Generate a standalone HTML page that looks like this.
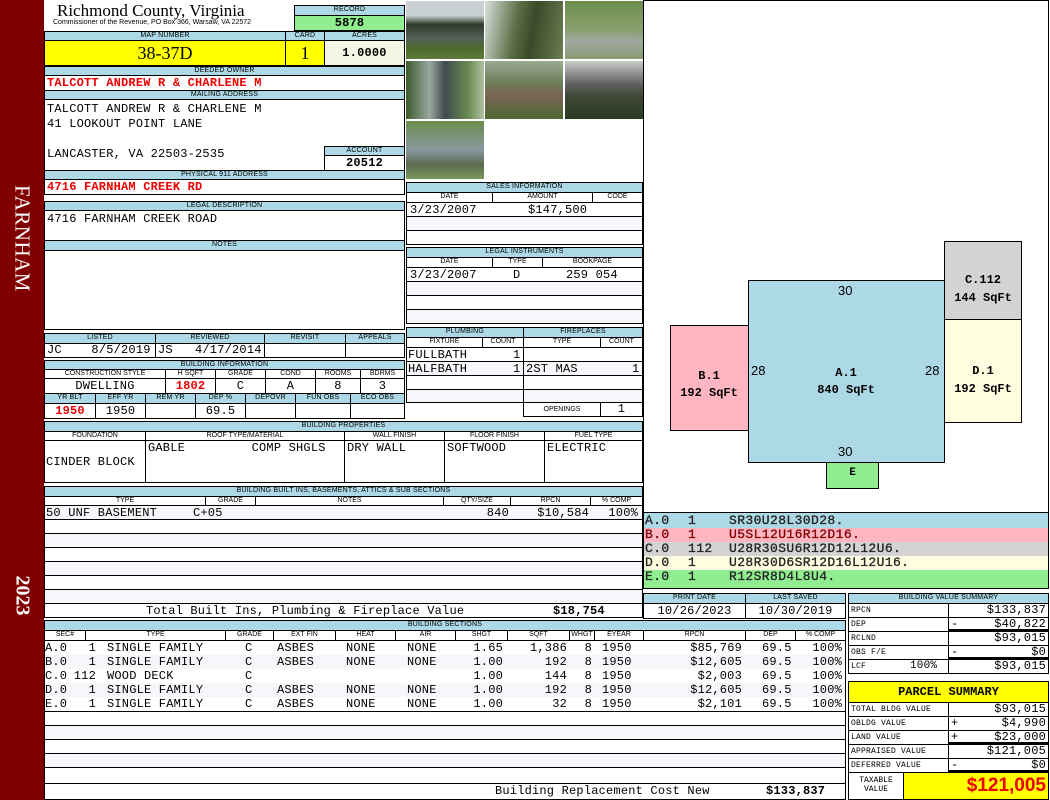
<!DOCTYPE html>
<html><head><meta charset="utf-8"><style>
*{margin:0;padding:0;box-sizing:border-box}
body{width:1050px;height:800px;position:relative;background:#fff;overflow:hidden;font-family:"Liberation Mono",monospace}
.a{position:absolute;border:1px solid #000;overflow:hidden;white-space:nowrap;background:#fff}
.h{position:absolute;border:1px solid #000;background:#add8e6;font:7px/8px "Liberation Sans",sans-serif;text-align:center;overflow:hidden;white-space:nowrap;letter-spacing:.2px}
.w{position:absolute;border:1px solid #000;background:#fff;font:7px/8px "Liberation Sans",sans-serif;text-align:center;overflow:hidden;white-space:nowrap}
.m{font-family:"Liberation Mono",monospace;font-size:12px;letter-spacing:.2px;padding:0 2px}
.r{color:#e00;font-weight:bold}
.t{position:absolute;white-space:nowrap}
.s{position:absolute;white-space:nowrap;font:12px/14px "Liberation Mono",monospace;letter-spacing:.2px}
.R{text-align:right}
.ph{position:absolute;border:1px solid #fff}
</style></head><body>
<div style="position:absolute;left:0;top:0;width:44px;height:800px;background:#800000"></div>
<div class="t" style="top:226px;transform:rotate(90deg);transform-origin:center;font:21px 'Liberation Serif',serif;color:#fff;text-align:center;left:-38px;width:120px;letter-spacing:.5px">FARNHAM</div>
<div class="t" style="left:-20px;top:584px;width:84px;transform:rotate(90deg);font:bold 20px 'Liberation Serif',serif;color:#fff;text-align:center">2023</div>

<div class="t" style="left:57px;top:1px;font:17px 'Liberation Serif',serif">Richmond County, Virginia</div>
<div class="t" style="left:53px;top:19px;font:7px 'Liberation Sans',sans-serif">Commissioner of the Revenue, PO Box 366, Warsaw, VA 22572</div>
<div class="h" style="left:294px;top:5px;width:111px;height:11px">RECORD</div>
<div class="a m" style="left:294px;top:15px;width:111px;height:16px;background:#90ee90;text-align:center;font-weight:bold;line-height:14px">5878</div>

<div class="h" style="left:44px;top:31px;width:242px;height:10px">MAP NUMBER</div>
<div class="h" style="left:285px;top:31px;width:40px;height:10px">CARD</div>
<div class="h" style="left:324px;top:31px;width:81px;height:10px">ACRES</div>
<div class="a" style="left:44px;top:40px;width:242px;height:26px;background:#ffff00;font:18px/24px 'Liberation Serif',serif;text-align:center">38-37D</div>
<div class="a" style="left:285px;top:40px;width:40px;height:26px;background:#ffff00;font:18px/24px 'Liberation Serif',serif;text-align:center">1</div>
<div class="a m" style="left:324px;top:40px;width:81px;height:26px;background:#f5f5e6;font-weight:bold;text-align:center;line-height:24px">1.0000</div>

<div class="h" style="left:44px;top:66px;width:361px;height:10px">DEEDED OWNER</div>
<div class="a m r" style="left:44px;top:75px;width:361px;height:16px;line-height:15px">TALCOTT ANDREW R &amp; CHARLENE M</div>
<div class="h" style="left:44px;top:90px;width:361px;height:10px">MAILING ADDRESS</div>
<div class="a m" style="left:44px;top:99px;width:361px;height:72px;line-height:15px;padding-top:2px;white-space:pre">TALCOTT ANDREW R &amp; CHARLENE M
41 LOOKOUT POINT LANE

LANCASTER, VA 22503-2535</div>
<div class="h" style="left:324px;top:146px;width:81px;height:10px">ACCOUNT</div>
<div class="a m" style="left:324px;top:155px;width:81px;height:16px;font-weight:bold;text-align:center;line-height:15px">20512</div>
<div class="h" style="left:44px;top:170px;width:361px;height:10px">PHYSICAL 911 ADDRESS</div>
<div class="a m r" style="left:44px;top:179px;width:361px;height:16px;line-height:15px">4716 FARNHAM CREEK RD</div>

<div class="h" style="left:44px;top:201px;width:361px;height:10px">LEGAL DESCRIPTION</div>
<div class="a m" style="left:44px;top:210px;width:361px;height:31px;line-height:16px">4716 FARNHAM CREEK ROAD</div>
<div class="h" style="left:44px;top:240px;width:361px;height:11px">NOTES</div>
<div class="a" style="left:44px;top:250px;width:361px;height:80px"></div>

<div class="h" style="left:44px;top:333px;width:112px;height:11px">LISTED</div>
<div class="h" style="left:155px;top:333px;width:110px;height:11px">REVIEWED</div>
<div class="h" style="left:264px;top:333px;width:82px;height:11px">REVISIT</div>
<div class="h" style="left:345px;top:333px;width:60px;height:11px">APPEALS</div>
<div class="a m" style="left:44px;top:343px;width:112px;height:15px;line-height:13px;white-space:pre">JC    8/5/2019</div>
<div class="a m" style="left:155px;top:343px;width:110px;height:15px;line-height:13px;white-space:pre">JS   4/17/2014</div>
<div class="a" style="left:264px;top:343px;width:82px;height:15px"></div>
<div class="a" style="left:345px;top:343px;width:60px;height:15px"></div>

<div class="h" style="left:44px;top:360px;width:361px;height:10px">BUILDING INFORMATION</div>
<div class="w" style="left:44px;top:369px;width:122px;height:10px">CONSTRUCTION STYLE</div>
<div class="w" style="left:165px;top:369px;width:51px;height:10px">H SQFT</div>
<div class="w" style="left:215px;top:369px;width:51px;height:10px">GRADE</div>
<div class="w" style="left:265px;top:369px;width:51px;height:10px">COND</div>
<div class="w" style="left:315px;top:369px;width:46px;height:10px">ROOMS</div>
<div class="w" style="left:360px;top:369px;width:45px;height:10px">BDRMS</div>
<div class="a m" style="left:44px;top:378px;width:122px;height:16px;text-align:center;line-height:14px">DWELLING</div>
<div class="a m r" style="left:165px;top:378px;width:51px;height:16px;text-align:center;line-height:14px">1802</div>
<div class="a m" style="left:215px;top:378px;width:51px;height:16px;text-align:center;line-height:14px">C</div>
<div class="a m" style="left:265px;top:378px;width:51px;height:16px;text-align:center;line-height:14px">A</div>
<div class="a m" style="left:315px;top:378px;width:46px;height:16px;text-align:center;line-height:14px">8</div>
<div class="a m" style="left:360px;top:378px;width:45px;height:16px;text-align:center;line-height:14px">3</div>
<div class="h" style="left:44px;top:393px;width:52px;height:11px">YR BLT</div>
<div class="h" style="left:95px;top:393px;width:51px;height:11px">EFF YR</div>
<div class="h" style="left:145px;top:393px;width:51px;height:11px">REM YR</div>
<div class="h" style="left:195px;top:393px;width:51px;height:11px">DEP %</div>
<div class="h" style="left:245px;top:393px;width:51px;height:11px">DEPOVR</div>
<div class="h" style="left:295px;top:393px;width:56px;height:11px">FUN OBS</div>
<div class="h" style="left:350px;top:393px;width:55px;height:11px">ECO OBS</div>
<div class="a m r" style="left:44px;top:403px;width:52px;height:16px;text-align:center;line-height:14px">1950</div>
<div class="a m" style="left:95px;top:403px;width:51px;height:16px;text-align:center;line-height:14px">1950</div>
<div class="a" style="left:145px;top:403px;width:51px;height:16px"></div>
<div class="a m" style="left:195px;top:403px;width:51px;height:16px;text-align:center;line-height:14px">69.5</div>
<div class="a" style="left:245px;top:403px;width:51px;height:16px"></div>
<div class="a" style="left:295px;top:403px;width:56px;height:16px"></div>
<div class="a" style="left:350px;top:403px;width:55px;height:16px"></div>

<!-- photos -->
<div class="ph" style="left:405px;top:0;width:80px;height:60px;background:linear-gradient(#c8d0d4 0,#c8d0d4 25%,#2f3a2a 40%,#55605a 65%,#4d6a2e 80%,#5d7a3a)"></div>
<div class="ph" style="left:484px;top:0;width:80px;height:60px;background:linear-gradient(100deg,#d8e0dc,#5b6e44 40%,#3a4a2a 60%,#6a7d50)"></div>
<div class="ph" style="left:564px;top:0;width:80px;height:60px;background:linear-gradient(#6b8c4c,#8aa070 50%,#a0a8a0 70%,#8a9a70)"></div>
<div class="ph" style="left:405px;top:60px;width:80px;height:60px;background:linear-gradient(90deg,#3c5a2a,#9aa8a0 30%,#404a50 50%,#6a8c50 80%,#b0c0a0)"></div>
<div class="ph" style="left:484px;top:60px;width:80px;height:60px;background:linear-gradient(#9aaa90,#6c7c58 40%,#7a6454 60%,#4c6a30)"></div>
<div class="ph" style="left:564px;top:60px;width:80px;height:60px;background:linear-gradient(#c8ccc8,#606060 40%,#404838 60%,#2a3a20)"></div>
<div class="ph" style="left:405px;top:120px;width:80px;height:60px;background:linear-gradient(#6c8c4c,#8898a0 50%,#5a6a50 75%,#7a9a5a)"></div>

<!-- sales -->
<div class="h" style="left:406px;top:182px;width:237px;height:11px">SALES INFORMATION</div>
<div class="w" style="left:406px;top:192px;width:87px;height:11px">DATE</div>
<div class="w" style="left:492px;top:192px;width:101px;height:11px">AMOUNT</div>
<div class="w" style="left:592px;top:192px;width:51px;height:11px">CODE</div>
<div class="a" style="left:406px;top:202px;width:237px;height:15px"></div>
<div class="s" style="left:410px;top:203px">3/23/2007</div>
<div class="s" style="left:528px;top:203px">$147,500</div>
<div class="a" style="left:406px;top:216px;width:237px;height:15px;background:#f7f7fb"></div>
<div class="a" style="left:406px;top:230px;width:237px;height:15px"></div>
<div class="h" style="left:406px;top:247px;width:237px;height:11px">LEGAL INSTRUMENTS</div>
<div class="w" style="left:406px;top:257px;width:87px;height:11px">DATE</div>
<div class="w" style="left:492px;top:257px;width:51px;height:11px">TYPE</div>
<div class="w" style="left:542px;top:257px;width:101px;height:11px">BOOKPAGE</div>
<div class="a" style="left:406px;top:267px;width:237px;height:15px"></div>
<div class="s" style="left:410px;top:268px">3/23/2007</div>
<div class="s" style="left:513px;top:268px">D</div>
<div class="s" style="left:566px;top:268px">259 054</div>
<div class="a" style="left:406px;top:281px;width:237px;height:15px;background:#f7f7fb"></div>
<div class="a" style="left:406px;top:295px;width:237px;height:15px"></div>
<div class="a" style="left:406px;top:309px;width:237px;height:15px;background:#f7f7fb"></div>

<!-- plumbing -->
<div class="h" style="left:406px;top:327px;width:118px;height:11px">PLUMBING</div>
<div class="h" style="left:523px;top:327px;width:120px;height:11px">FIREPLACES</div>
<div class="w" style="left:406px;top:337px;width:77px;height:11px">FIXTURE</div>
<div class="w" style="left:482px;top:337px;width:42px;height:11px">COUNT</div>
<div class="w" style="left:523px;top:337px;width:78px;height:11px">TYPE</div>
<div class="w" style="left:600px;top:337px;width:43px;height:11px">COUNT</div>
<div class="a" style="left:406px;top:347px;width:118px;height:15px"></div>
<div class="a" style="left:406px;top:361px;width:118px;height:15px;background:#f7f7fb"></div>
<div class="a" style="left:406px;top:375px;width:118px;height:15px"></div>
<div class="a" style="left:406px;top:389px;width:118px;height:14px;background:#f7f7fb"></div>
<div class="a" style="left:523px;top:347px;width:120px;height:15px"></div>
<div class="a" style="left:523px;top:361px;width:120px;height:15px;background:#f7f7fb"></div>
<div class="a" style="left:523px;top:375px;width:120px;height:15px"></div>
<div class="a" style="left:523px;top:389px;width:120px;height:14px;background:#f7f7fb"></div>
<div class="s" style="left:408px;top:348px">FULLBATH</div>
<div class="s" style="left:513px;top:348px">1</div>
<div class="s" style="left:408px;top:362px">HALFBATH</div>
<div class="s" style="left:513px;top:362px">1</div>
<div class="s" style="left:526px;top:362px">2ST MAS</div>
<div class="s" style="left:632px;top:362px">1</div>
<div class="w" style="left:523px;top:402px;width:78px;height:15px;line-height:13px">OPENINGS</div>
<div class="a m" style="left:600px;top:402px;width:43px;height:15px;text-align:center;line-height:13px">1</div>

<!-- building properties -->
<div class="h" style="left:44px;top:421px;width:599px;height:11px">BUILDING PROPERTIES</div>
<div class="w" style="left:44px;top:431px;width:102px;height:10px">FOUNDATION</div>
<div class="w" style="left:145px;top:431px;width:200px;height:10px">ROOF TYPE/MATERIAL</div>
<div class="w" style="left:344px;top:431px;width:101px;height:10px">WALL FINISH</div>
<div class="w" style="left:444px;top:431px;width:101px;height:10px">FLOOR FINISH</div>
<div class="w" style="left:544px;top:431px;width:99px;height:10px">FUEL TYPE</div>
<div class="a m" style="left:44px;top:440px;width:102px;height:43px;line-height:42px;padding:0 1px">CINDER BLOCK</div>
<div class="a m" style="left:145px;top:440px;width:200px;height:43px;line-height:14px;white-space:pre">GABLE         COMP SHGLS</div>
<div class="a m" style="left:344px;top:440px;width:101px;height:43px;line-height:14px">DRY WALL</div>
<div class="a m" style="left:444px;top:440px;width:101px;height:43px;line-height:14px">SOFTWOOD</div>
<div class="a m" style="left:544px;top:440px;width:99px;height:43px;line-height:14px">ELECTRIC</div>

<!-- built ins -->
<div class="h" style="left:44px;top:486px;width:599px;height:11px">BUILDING BUILT INS, BASEMENTS, ATTICS &amp; SUB SECTIONS</div>
<div class="w" style="left:44px;top:496px;width:162px;height:10px">TYPE</div>
<div class="w" style="left:205px;top:496px;width:51px;height:10px">GRADE</div>
<div class="w" style="left:255px;top:496px;width:189px;height:10px">NOTES</div>
<div class="w" style="left:443px;top:496px;width:68px;height:10px">QTY/SIZE</div>
<div class="w" style="left:510px;top:496px;width:81px;height:10px">RPCN</div>
<div class="w" style="left:590px;top:496px;width:53px;height:10px">% COMP</div>
<div class="a" style="left:44px;top:505px;width:599px;height:15px;background:#f7f7fb"></div>
<div class="s" style="left:46px;top:506px">50 UNF BASEMENT</div>
<div class="s" style="left:193px;top:506px">C+05</div>
<div class="s R" style="left:440px;top:506px;width:69px">840</div>
<div class="s R" style="left:510px;top:506px;width:79px">$10,584</div>
<div class="s R" style="left:590px;top:506px;width:48px">100%</div>
<div class="a" style="left:44px;top:519px;width:599px;height:15px"></div>
<div class="a" style="left:44px;top:533px;width:599px;height:15px;background:#f7f7fb"></div>
<div class="a" style="left:44px;top:547px;width:599px;height:15px"></div>
<div class="a" style="left:44px;top:561px;width:599px;height:15px;background:#f7f7fb"></div>
<div class="a" style="left:44px;top:575px;width:599px;height:15px"></div>
<div class="a" style="left:44px;top:589px;width:599px;height:15px;background:#f7f7fb"></div>
<div class="a" style="left:44px;top:603px;width:599px;height:15px"></div>
<div class="s" style="left:146px;top:604px">Total Built Ins, Plumbing &amp; Fireplace Value</div>
<div class="s" style="left:553px;top:604px;font-weight:bold">$18,754</div>

<!-- building sections -->
<div class="h" style="left:44px;top:620px;width:802px;height:11px">BUILDING SECTIONS</div>
<div class="w" style="left:44px;top:630px;width:42px;height:11px">SEC#</div>
<div class="w" style="left:85px;top:630px;width:141px;height:11px">TYPE</div>
<div class="w" style="left:225px;top:630px;width:49px;height:11px">GRADE</div>
<div class="w" style="left:273px;top:630px;width:63px;height:11px">EXT FIN</div>
<div class="w" style="left:335px;top:630px;width:61px;height:11px">HEAT</div>
<div class="w" style="left:395px;top:630px;width:61px;height:11px">AIR</div>
<div class="w" style="left:455px;top:630px;width:53px;height:11px">SHGT</div>
<div class="w" style="left:507px;top:630px;width:63px;height:11px">SQFT</div>
<div class="w" style="left:569px;top:630px;width:26px;height:11px">WHGT</div>
<div class="w" style="left:594px;top:630px;width:50px;height:11px">EYEAR</div>
<div class="w" style="left:643px;top:630px;width:103px;height:11px">RPCN</div>
<div class="w" style="left:745px;top:630px;width:51px;height:11px">DEP</div>
<div class="w" style="left:795px;top:630px;width:51px;height:11px">% COMP</div>
<div class="a" style="left:44px;top:640px;width:802px;height:72px"></div>
<div style="position:absolute;left:45px;top:655px;width:800px;height:14px;background:#f7f7fb"></div>
<div style="position:absolute;left:45px;top:683px;width:800px;height:14px;background:#f7f7fb"></div>

<div class="s" style="left:45px;top:641px;line-height:14px;white-space:pre">A.0
B.0
C.0
D.0
E.0</div>
<div class="s R" style="left:60px;top:641px;width:36px;white-space:pre">1
1
112
1
1</div>
<div class="s" style="left:107px;top:641px;white-space:pre">SINGLE FAMILY
SINGLE FAMILY
WOOD DECK
SINGLE FAMILY
SINGLE FAMILY</div>
<div class="s" style="left:245px;top:641px;white-space:pre">C
C
C
C
C</div>
<div class="s" style="left:277px;top:641px;white-space:pre">ASBES
ASBES

ASBES
ASBES</div>
<div class="s" style="left:346px;top:641px;white-space:pre">NONE
NONE

NONE
NONE</div>
<div class="s" style="left:407px;top:641px;white-space:pre">NONE
NONE

NONE
NONE</div>
<div class="s R" style="left:455px;top:641px;width:48px;white-space:pre">1.65
1.00
1.00
1.00
1.00</div>
<div class="s R" style="left:507px;top:641px;width:60px;white-space:pre">1,386
192
144
192
32</div>
<div class="s R" style="left:570px;top:641px;width:22px;white-space:pre">8
8
8
8
8</div>
<div class="s" style="left:602px;top:641px;white-space:pre">1950
1950
1950
1950
1950</div>
<div class="s R" style="left:645px;top:641px;width:97px;white-space:pre">$85,769
$12,605
$2,003
$12,605
$2,101</div>
<div class="s" style="left:762px;top:641px;white-space:pre">69.5
69.5
69.5
69.5
69.5</div>
<div class="s R" style="left:796px;top:641px;width:46px;white-space:pre">100%
100%
100%
100%
100%</div>

<div class="a" style="left:44px;top:711px;width:802px;height:15px"></div>
<div class="a" style="left:44px;top:725px;width:802px;height:15px;background:#f7f7fb"></div>
<div class="a" style="left:44px;top:739px;width:802px;height:15px"></div>
<div class="a" style="left:44px;top:753px;width:802px;height:15px;background:#f7f7fb"></div>
<div class="a" style="left:44px;top:767px;width:802px;height:17px"></div>
<div class="a" style="left:44px;top:783px;width:802px;height:17px"></div>
<div class="s" style="left:495px;top:784px">Building Replacement Cost New</div>
<div class="s" style="left:766px;top:784px;font-weight:bold">$133,837</div>

<!-- sketch -->
<div class="a" style="left:643px;top:0;width:406px;height:513px"></div>
<div class="a" style="left:748px;top:280px;width:197px;height:183px;background:#add8e6"></div>
<div class="a" style="left:670px;top:325px;width:79px;height:106px;background:#ffb6c1"></div>
<div class="a" style="left:944px;top:241px;width:78px;height:79px;background:#d3d3d3"></div>
<div class="a" style="left:944px;top:319px;width:78px;height:104px;background:#fffde0"></div>
<div class="a" style="left:826px;top:462px;width:53px;height:27px;background:#90ee90"></div>
<div class="t" style="left:838px;top:283px;font:13px 'Liberation Sans',sans-serif">30</div>
<div class="t" style="left:838px;top:444px;font:13px 'Liberation Sans',sans-serif">30</div>
<div class="t" style="left:751px;top:363px;font:13px 'Liberation Sans',sans-serif">28</div>
<div class="t" style="left:925px;top:363px;font:13px 'Liberation Sans',sans-serif">28</div>
<div class="t" style="left:796px;top:365px;width:100px;text-align:center;font:bold 12px/17px 'Liberation Mono',monospace">A.1<br>840 SqFt</div>
<div class="t" style="left:670px;top:368px;width:78px;text-align:center;font:bold 12px/17px 'Liberation Mono',monospace">B.1<br>192 SqFt</div>
<div class="t" style="left:944px;top:271px;width:78px;text-align:center;font:bold 12px/18px 'Liberation Mono',monospace">C.112<br>144 SqFt</div>
<div class="t" style="left:944px;top:362px;width:78px;text-align:center;font:bold 12px/18px 'Liberation Mono',monospace">D.1<br>192 SqFt</div>
<div class="t" style="left:826px;top:467px;width:53px;text-align:center;font:bold 11px 'Liberation Mono',monospace">E</div>

<!-- section list -->
<div class="a" style="left:643px;top:512px;width:406px;height:77px"></div>
<div class="t" style="left:644px;top:513px;width:404px;height:15px;background:#add8e6"></div>
<div class="t" style="left:644px;top:528px;width:404px;height:14px;background:#ffb6c1"></div>
<div class="t" style="left:644px;top:542px;width:404px;height:14px;background:#d3d3d3"></div>
<div class="t" style="left:644px;top:556px;width:404px;height:14px;background:#fffde0"></div>
<div class="t" style="left:644px;top:570px;width:404px;height:18px;background:#90ee90"></div>
<div class="s" style="left:645px;top:514px;line-height:14px;white-space:pre;color:#222;font-size:13px;letter-spacing:.4px;-webkit-text-stroke:.3px">A.0
<span style="color:#800000">B.0</span>
C.0
D.0
E.0</div>
<div class="s" style="left:688px;top:514px;line-height:14px;white-space:pre;color:#222;font-size:13px;letter-spacing:.4px;-webkit-text-stroke:.3px">1
<span style="color:#800000">1</span>
112
1
1</div>
<div class="s" style="left:729px;top:514px;line-height:14px;white-space:pre;color:#222;font-size:13px;letter-spacing:.4px;-webkit-text-stroke:.3px">SR30U28L30D28.
<span style="color:#800000">U5SL12U16R12D16.</span>
U28R30SU6R12D12L12U6.
U28R30D6SR12D16L12U16.
R12SR8D4L8U4.</div>

<div class="h" style="left:643px;top:593px;width:103px;height:11px">PRINT DATE</div>
<div class="h" style="left:745px;top:593px;width:101px;height:11px">LAST SAVED</div>
<div class="a m" style="left:643px;top:603px;width:103px;height:16px;text-align:center;line-height:14px">10/26/2023</div>
<div class="a m" style="left:745px;top:603px;width:101px;height:16px;text-align:center;line-height:14px">10/30/2019</div>

<!-- value summary -->
<div class="h" style="left:848px;top:593px;width:201px;height:11px">BUILDING VALUE SUMMARY</div>
<div class="a m" style="left:848px;top:603px;width:101px;height:15px;font-size:8px;line-height:13px">RPCN</div>
<div class="a m" style="left:948px;top:603px;width:101px;height:15px;text-align:right;line-height:13px">$133,837</div>
<div class="a m" style="left:848px;top:617px;width:101px;height:15px;font-size:8px;line-height:13px">DEP</div>
<div class="a m" style="left:948px;top:617px;width:101px;height:15px;text-align:right;line-height:13px;border-bottom:3px solid #000">$40,822</div>
<div class="s" style="left:951px;top:617px">-</div>
<div class="a m" style="left:848px;top:631px;width:101px;height:15px;font-size:8px;line-height:13px">RCLND</div>
<div class="a m" style="left:948px;top:631px;width:101px;height:15px;text-align:right;line-height:13px">$93,015</div>
<div class="a m" style="left:848px;top:645px;width:101px;height:15px;font-size:8px;line-height:13px">OBS F/E</div>
<div class="a m" style="left:948px;top:645px;width:101px;height:15px;text-align:right;line-height:13px;border-bottom:3px solid #000">$0</div>
<div class="s" style="left:951px;top:645px">-</div>
<div class="a m" style="left:848px;top:659px;width:101px;height:15px;font-size:8px;line-height:13px">LCF</div>
<div class="s" style="left:910px;top:659px;font-size:11px">100%</div>
<div class="a m" style="left:948px;top:659px;width:101px;height:15px;text-align:right;line-height:13px">$93,015</div>

<div class="a" style="left:848px;top:681px;width:201px;height:22px;background:#ffff00;font:bold 12px/20px 'Liberation Mono',monospace;text-align:center">PARCEL SUMMARY</div>
<div class="a m" style="left:848px;top:702px;width:101px;height:15px;font-size:8px;line-height:13px">TOTAL BLDG VALUE</div>
<div class="a m" style="left:948px;top:702px;width:101px;height:15px;text-align:right;line-height:13px">$93,015</div>
<div class="a m" style="left:848px;top:716px;width:101px;height:15px;font-size:8px;line-height:13px">OBLDG VALUE</div>
<div class="a m" style="left:948px;top:716px;width:101px;height:15px;text-align:right;line-height:13px">$4,990</div>
<div class="s" style="left:951px;top:716px">+</div>
<div class="a m" style="left:848px;top:730px;width:101px;height:15px;font-size:8px;line-height:13px">LAND VALUE</div>
<div class="a m" style="left:948px;top:730px;width:101px;height:15px;text-align:right;line-height:13px;border-bottom:3px solid #000">$23,000</div>
<div class="s" style="left:951px;top:730px">+</div>
<div class="a m" style="left:848px;top:744px;width:101px;height:15px;font-size:8px;line-height:13px">APPRAISED VALUE</div>
<div class="a m" style="left:948px;top:744px;width:101px;height:15px;text-align:right;line-height:13px">$121,005</div>
<div class="a m" style="left:848px;top:758px;width:101px;height:15px;font-size:8px;line-height:13px">DEFERRED VALUE</div>
<div class="a m" style="left:948px;top:758px;width:101px;height:15px;text-align:right;line-height:13px;border-bottom:3px solid #000">$0</div>
<div class="s" style="left:951px;top:758px">-</div>
<div class="a" style="left:848px;top:772px;width:56px;height:28px;font:8px/9px 'Liberation Mono',monospace;text-align:center;padding-top:3px">TAXABLE<br>VALUE</div>
<div class="a" style="left:903px;top:772px;width:146px;height:28px;background:#ffff00;color:#e00;font:bold 19px/26px 'Liberation Sans',sans-serif;text-align:right;padding-right:2px">$121,005</div>
</body></html>
